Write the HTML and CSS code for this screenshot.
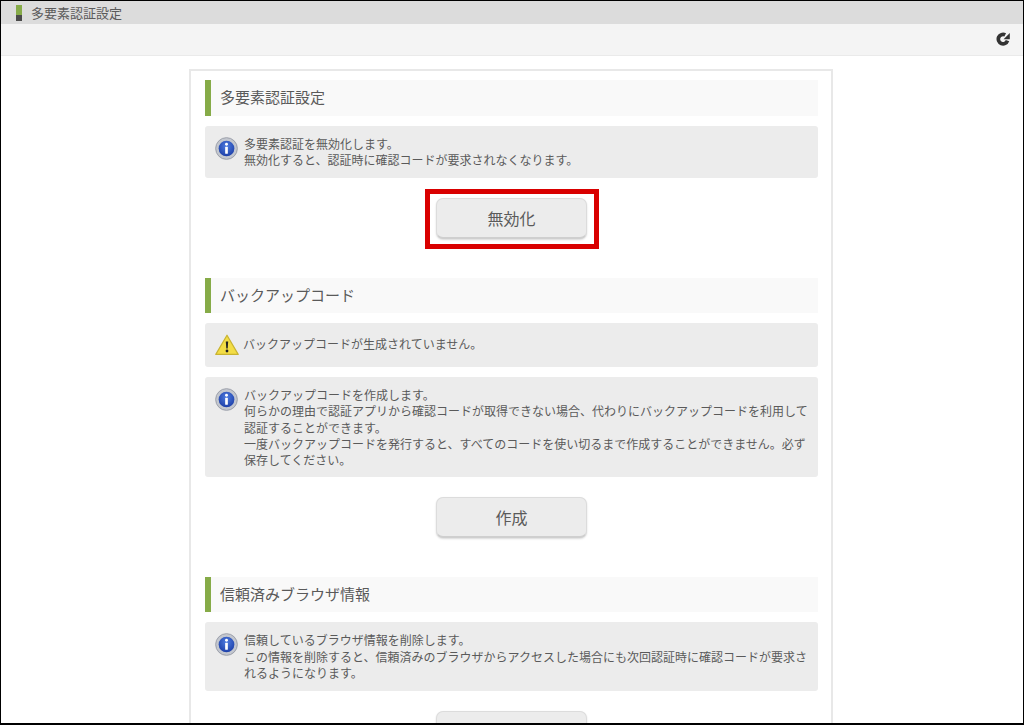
FILE: index.html
```html
<!DOCTYPE html>
<html lang="ja">
<head>
<meta charset="utf-8">
<title>多要素認証設定</title>
<link rel="stylesheet" href="styles.css">
</head>
<body>
<div class="frame">
  <header class="title-bar"><span class="title-mark"></span><span class="title-text">多要素認証設定</span></header>
  <div class="toolbar">
    <svg class="reload" viewBox="0 0 14 14" width="14" height="14" aria-hidden="true"><path d="M11.5 8.6A4.7 4.7 0 1 1 9.2 2.9" fill="none" stroke="#333" stroke-width="3.7"/><path d="M13.8 1V7.2H7.6z" fill="#333"/></svg>
  </div>
  <main class="content">
    <div class="card">
      <section class="section">
        <h2 class="heading">多要素認証設定</h2>
        <div class="msg roomy">
          <svg class="ico-info" viewBox="0 0 24 24" width="23" height="23" aria-hidden="true"><use href="#info"/></svg>
          <p>多要素認証を無効化します。<br>無効化すると、認証時に確認コードが要求されなくなります。</p>
        </div>
        <div class="actions">
          <div class="btn-wrap"><button class="btn">無効化</button><span class="callout"></span></div>
        </div>
      </section>
      <section class="section">
        <h2 class="heading">バックアップコード</h2>
        <div class="msg warn">
          <svg class="ico-warn" viewBox="0 0 24 22" width="24" height="22" aria-hidden="true"><path d="M12 1.2 23.2 20.4H.8z" fill="#f3dd45" stroke="#c9b430" stroke-width="1.2" stroke-linejoin="round"/><path d="M10.8 7.5h2.4l-.5 7h-1.4z" fill="#222"/><circle cx="12" cy="17" r="1.4" fill="#222"/></svg>
          <p>バックアップコードが生成されていません。</p>
        </div>
        <div class="msg">
          <svg class="ico-info" viewBox="0 0 24 24" width="23" height="23" aria-hidden="true"><use href="#info"/></svg>
          <p>バックアップコードを作成します。<br>何らかの理由で認証アプリから確認コードが取得できない場合、代わりにバックアップコードを利用して認証することができます。<br>一度バックアップコードを発行すると、すべてのコードを使い切るまで作成することができません。必ず保存してください。</p>
        </div>
        <div class="actions"><button class="btn">作成</button></div>
      </section>
      <section class="section">
        <h2 class="heading">信頼済みブラウザ情報</h2>
        <div class="msg roomy">
          <svg class="ico-info" viewBox="0 0 24 24" width="23" height="23" aria-hidden="true"><use href="#info"/></svg>
          <p>信頼しているブラウザ情報を削除します。<br>この情報を削除すると、信頼済みのブラウザからアクセスした場合にも次回認証時に確認コードが要求されるようになります。</p>
        </div>
        <div class="actions"><button class="btn">削除</button></div>
      </section>
    </div>
  </main>
</div>
<svg class="defs" width="0" height="0" aria-hidden="true"><defs>
  <radialGradient id="blue" cx="50%" cy="35%" r="65%"><stop offset="0" stop-color="#4f7de0"/><stop offset="1" stop-color="#1d3fa8"/></radialGradient>
  <symbol id="info" viewBox="0 0 24 24"><circle cx="12" cy="12" r="11.3" fill="#c3c7cf" stroke="#9a9ea8" stroke-width="1"/><circle cx="12" cy="12" r="8.2" fill="url(#blue)"/><circle cx="12" cy="7.6" r="1.5" fill="#fff"/><rect x="10.6" y="10.2" width="2.8" height="7.4" rx=".6" fill="#fff"/></symbol>
</defs></svg>
</body>
</html>
```
FILE: styles.css
```css
* { box-sizing: border-box; }
html, body { margin: 0; padding: 0; height: 725px; overflow: hidden; background: #fff; }
body { font-family: "Liberation Sans", "Noto Sans CJK JP", sans-serif; color: #5a5a5a; }
.frame { height: 725px; border: 1px solid #000; border-bottom-width: 2px; overflow: hidden; display: flex; flex-direction: column; }
.title-bar { height: 23px; flex: none; background: #dcdcdc; display: flex; align-items: center; padding: 0 0 0 15px; }
.title-mark { width: 6px; height: 16px; margin-right: 9px; background: linear-gradient(#86ab48 0 10px, #4a4a4a 10px); }
.title-text { font-size: 13px; color: #5a5a5a; }
.toolbar { height: 32px; flex: none; background: #f4f4f4; border-bottom: 1px solid #eaeaea; display: flex; align-items: center; justify-content: flex-end; padding: 0 13px 2px 0; }
.reload { display: block; }
.content { flex: 1; padding: 13px 190px 0 188px; }
.card { border: 2px solid #e8e8e8; padding: 9px 13px 0 14px; }
.section { padding-bottom: 38.5px; }
.heading { margin: 0 0 10px; height: 35.7px; background: #f9f9f9; border-left: 6px solid #86ab48; padding-left: 9px; font-size: 15px; font-weight: normal; line-height: 35.7px; color: #5a5a5a; }
.msg { display: flex; align-items: flex-start; gap: 6px; background: #ececec; border-radius: 3px; padding: 11px 10px 8px 10px; margin-bottom: 10px; }
.msg.roomy { padding-bottom: 9px; }
.msg p { margin: 0; font-size: 12px; line-height: 16.2px; color: #5a5a5a; }
.msg.warn { align-items: center; gap: 4px; padding: 11px 10px; }
.ico-info, .ico-warn { flex: none; }
.actions { display: flex; justify-content: center; padding-top: 10px; }
.btn-wrap { position: relative; }
.btn { display: block; width: 151px; height: 41px; border: 1px solid #dcdcdc; border-bottom: 2px solid #cfcfcf; border-radius: 7px; background: #ececec; box-shadow: 0 1px 2px rgba(0,0,0,.15); font-family: inherit; font-size: 16px; color: #5a5a5a; padding: 0; }
.callout { position: absolute; left: -11px; top: -9px; width: 174px; height: 60px; border: 5px solid #d90000; pointer-events: none; }
.defs { position: absolute; }
```
